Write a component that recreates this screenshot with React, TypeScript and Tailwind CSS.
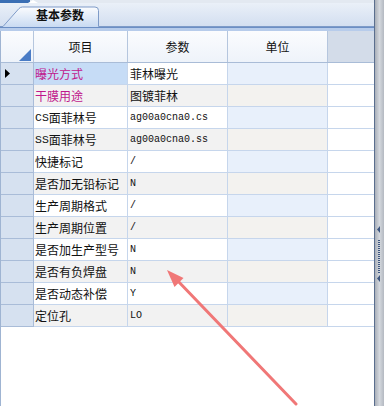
import React from 'react'

interface Row {
  name: string
  value: string
  pink?: boolean
  selected?: boolean
}

const rows: Row[] = [
  { name: '曝光方式', value: '菲林曝光', pink: true, selected: true },
  { name: '干膜用途', value: '图镀菲林', pink: true },
  { name: 'CS面菲林号', value: 'ag00a0cna0.cs' },
  { name: 'SS面菲林号', value: 'ag00a0cna0.ss' },
  { name: '快捷标记', value: '/' },
  { name: '是否加无铅标记', value: 'N' },
  { name: '生产周期格式', value: '/' },
  { name: '生产周期位置', value: '/' },
  { name: '是否加生产型号', value: 'N' },
  { name: '是否有负焊盘', value: 'N' },
  { name: '是否动态补偿', value: 'Y' },
  { name: '定位孔', value: 'LO' },
]

// ascii runs get the narrow mono face, like the old SimSun grid
const Txt = ({ s, big }: { s: string; big?: boolean }) => (
  <>
    {s.split(/([\x00-\x7f]+)/).filter(Boolean).map((part, i) =>
      /^[\x00-\x7f]+$/.test(part) ? (
        <span key={i} className={`font-['Liberation_Mono',monospace] ${big ? 'text-[11.5px]' : 'text-[10px]'}`}>{part}</span>
      ) : (
        <span key={i}>{part}</span>
      )
    )}
  </>
)

const Splitter = () => (
  <div className="relative w-[10px] h-full border-l border-[#5a6e8e] bg-gradient-to-r from-[#a9afb8] via-[#d4d8de] to-[#b4b9c1]">
    <svg className="absolute left-0 top-0" width="9" height="406">
      <polygon points="5,226 5,233 2,229.5" fill="#3d5680" />
      <polygon points="5,275 5,282 2,278.5" fill="#3d5680" />
      {Array.from({ length: 17 }).map((_, i) => (
        <rect key={i} x="3" y={240 + i * 2} width="2" height="1" fill="#3d5680" />
      ))}
    </svg>
  </div>
)

export default function App() {
  return (
    <div className="relative w-[384px] h-[406px] flex bg-white overflow-hidden font-['Noto_Sans_CJK_SC',sans-serif] text-[12px] text-[#111]">
      <div className="w-[374px] flex flex-col">
        {/* top strip */}
        <svg width="374" height="3" className="block">
          <rect x="0" y="0" width="374" height="3" fill="#e3e9f1" />
          <rect x="0" y="0" width="30" height="3" fill="#3b6fb4" />
          <polygon points="28,3 33,0 38,3" fill="#ffffff" />
        </svg>

        {/* tab bar */}
        <div className="relative h-[24px] bg-gradient-to-b from-[#eaf0f8] to-[#d2def0]">
          <svg className="absolute left-0 top-0" width="374" height="24">
            <defs>
              <linearGradient id="tabg" x1="0" y1="0" x2="0" y2="1">
                <stop offset="0" stopColor="#fbfcfe" />
                <stop offset="1" stopColor="#c8daf2" />
              </linearGradient>
            </defs>
            <path d="M3 24 L19 5.5 Q20.5 4 22.5 4 L95 4 Q98.5 4 98.5 7.5 L98.5 24 Z" fill="url(#tabg)" />
            <path d="M0 23.5 L3 23.5 L19 5.5 Q20.5 4 22.5 4 L95 4 Q98.5 4 98.5 7.5 L98.5 23.5 L374 23.5" fill="none" stroke="#7e9bc8" strokeWidth="1" />
          </svg>
          <span className="absolute left-[36px] top-[4px] font-bold text-[12px] leading-[16px]">基本参数</span>
        </div>

        <div className="h-px bg-[#6b8ec4]" />
        <div className="h-[3px] bg-[#b7cceb]" />

        {/* grid */}
        <div className="flex-1 flex flex-col border-l border-[#9fb4d2]">
          {/* header */}
          <div className="flex h-[32px] border-b border-[#a9bcd7]">
            <div className="relative w-[33px] border-r border-[#b5c6de] bg-gradient-to-b from-[#fbfcfe] to-[#eef3fa]">
              <svg className="absolute right-[2px] bottom-[1px]" width="12" height="12">
                <polygon points="12,0 12,12 0,12" fill="#4a7cc6" />
              </svg>
            </div>
            {['项目', '参数', '单位'].map((h, i) => (
              <div
                key={h}
                className={`flex items-center justify-center border-r border-[#b5c6de] bg-gradient-to-b from-[#fbfcfe] to-[#eef3fa] ${i === 0 ? 'w-[94px]' : 'w-[100px]'}`}
              >
                {h}
              </div>
            ))}
            <div className="flex-1 bg-[#d3dce9]" />
          </div>

          {/* rows */}
          {rows.map((r, i) => {
            const gray = i % 2 === 1
            return (
              <div key={r.name} className="flex h-[22px]">
                <div className="w-[33px] flex items-center pl-[4px] border-r border-b border-[#a9bcd8] bg-[#d6e1f0]">
                  {r.selected && (
                    <svg width="5" height="9">
                      <polygon points="0,0 5,4.5 0,9" fill="#000" />
                    </svg>
                  )}
                </div>
                <div
                  className={`w-[94px] flex items-center pl-[1px] whitespace-nowrap border-r border-b border-[#c6d6ec] ${
                    r.selected ? 'bg-[#c6dcf6]' : gray ? 'bg-[#f2f2f2]' : 'bg-white'
                  } ${r.pink ? 'text-[#c0178c]' : ''}`}
                >
                  <Txt s={r.name} big />
                </div>
                <div
                  className={`w-[100px] flex items-center pl-[2px] whitespace-nowrap border-r border-b border-[#c6d6ec] ${
                    gray ? 'bg-[#f2f2f2]' : 'bg-white'
                  }`}
                >
                  <Txt s={r.value} />
                </div>
                <div
                  className={`w-[100px] border-r border-b border-[#c6d6ec] ${gray ? 'bg-[#f3f2ef]' : 'bg-[#e8f0fb]'}`}
                />
                <div className="flex-1 border-b border-[#c6d6ec] bg-white" />
              </div>
            )
          })}
          <div className="flex-1 bg-white" />
        </div>
      </div>

      <Splitter />

      {/* annotation arrow */}
      <svg className="absolute left-0 top-0 pointer-events-none" width="384" height="406">
        <line x1="296" y1="404" x2="176" y2="279" stroke="#f07777" strokeWidth="3" strokeLinecap="round" />
        <polygon points="167,270 183.5,278 174.5,287" fill="#f07777" />
      </svg>
    </div>
  )
}
